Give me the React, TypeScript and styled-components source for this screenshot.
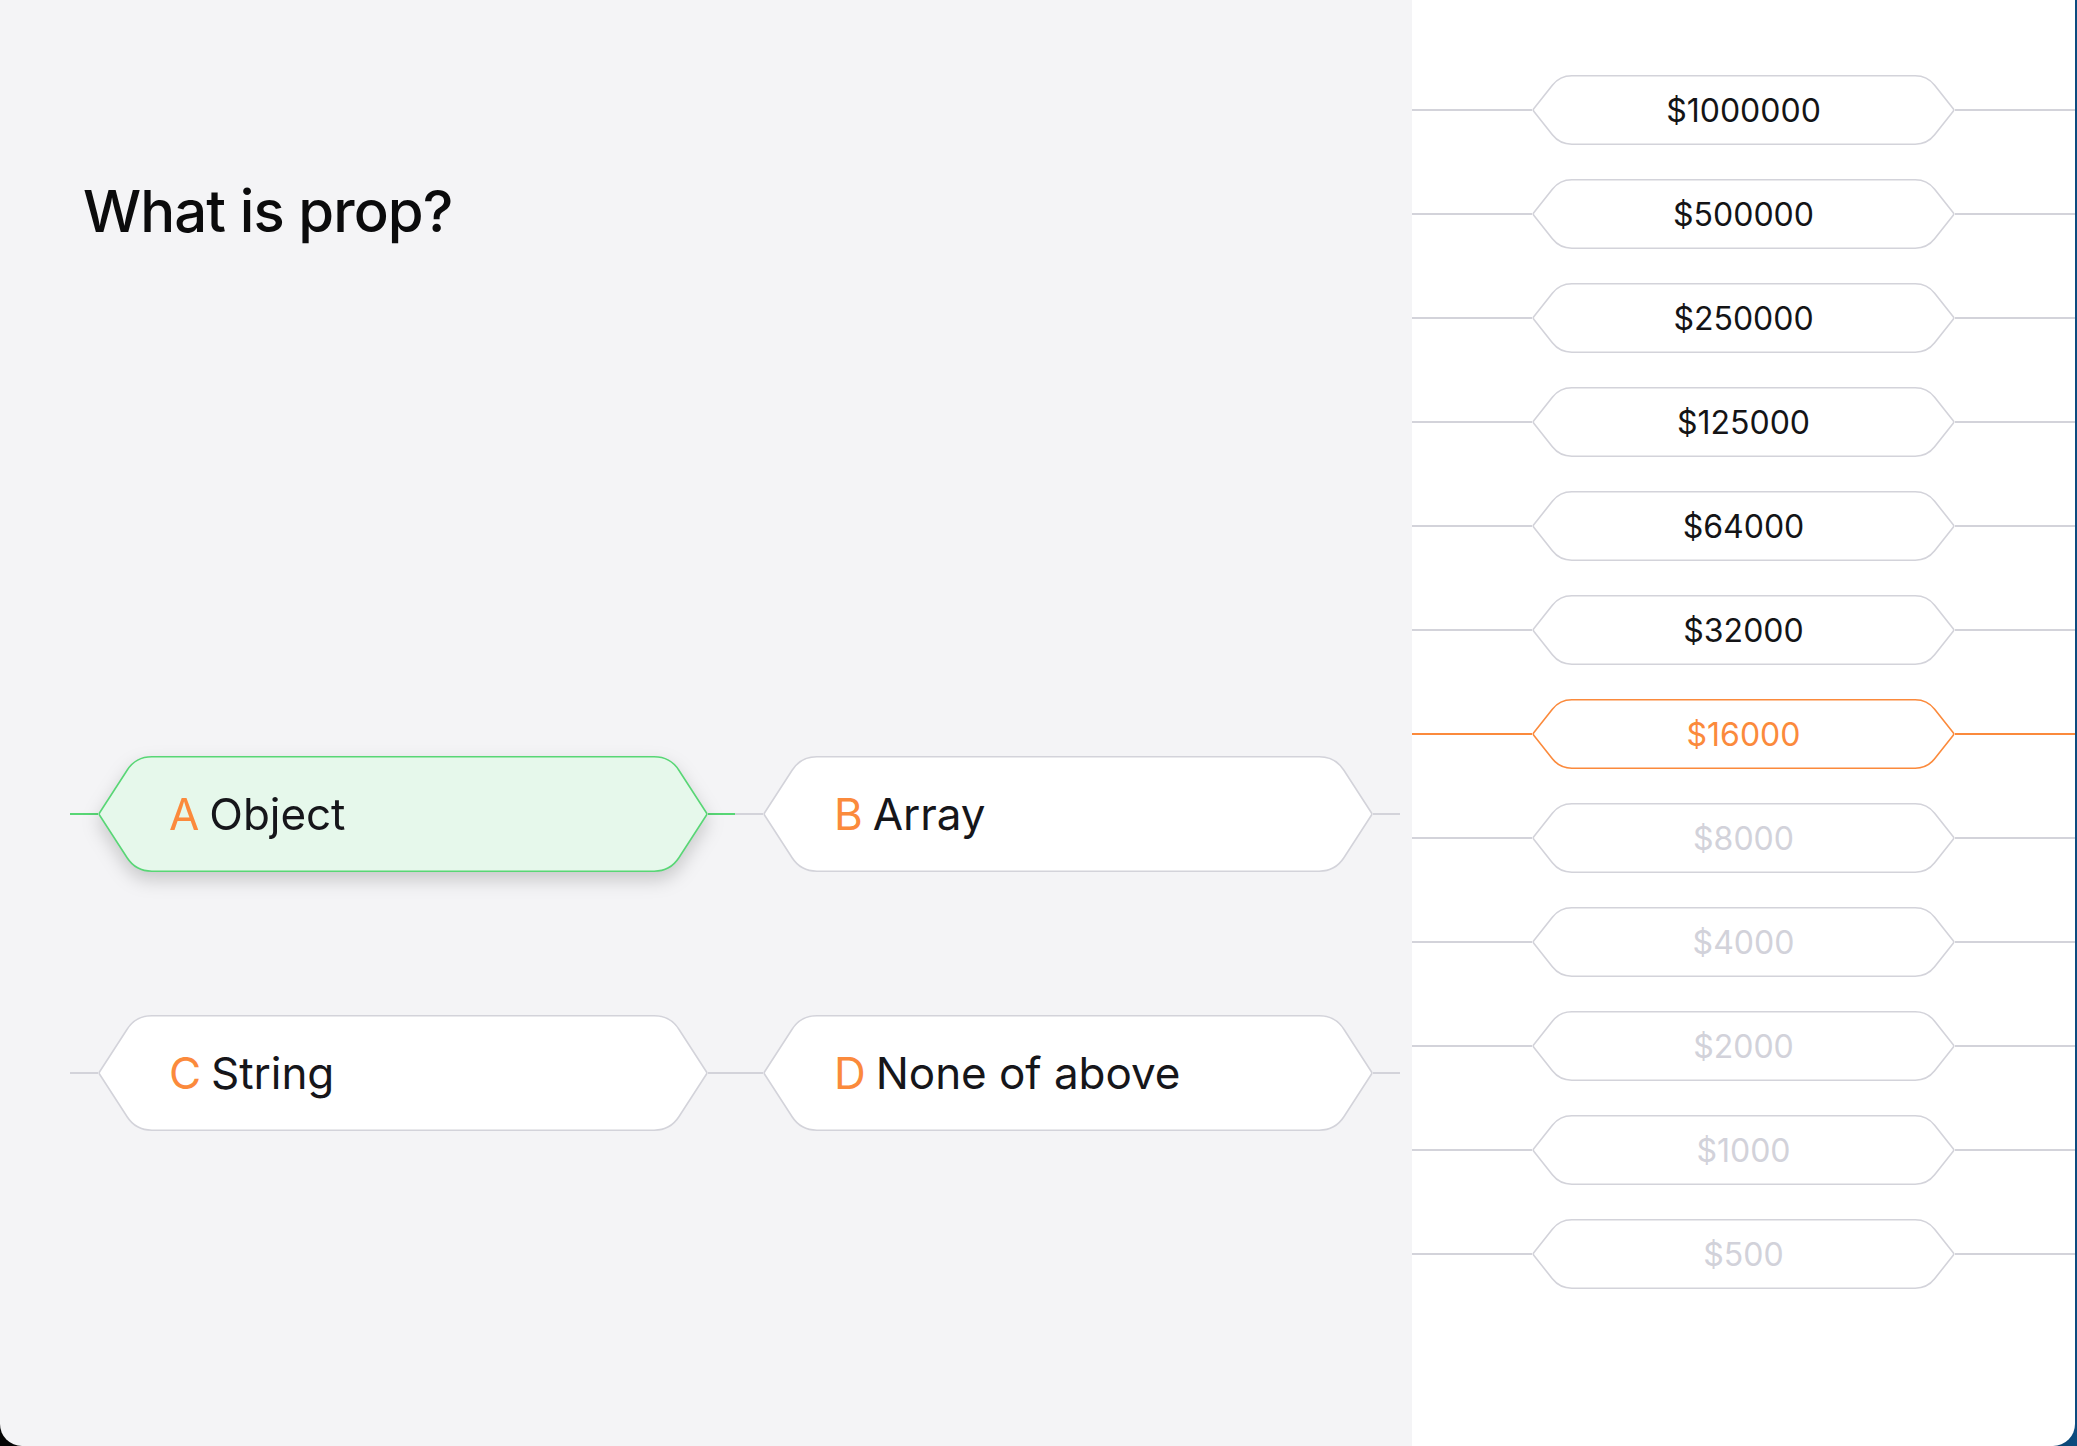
import React from "react";
import styled, { createGlobalStyle, css } from "styled-components";

const GlobalStyle = createGlobalStyle`
  html, body {
    margin: 0;
    padding: 0;
    height: 100%;
  }
  body {
    background: linear-gradient(to right, #050505 0%, #050505 92%, #0c4c80 100%);
    font-family: Inter, "Noto Sans", "Liberation Sans", sans-serif;
    overflow: hidden;
  }
  #root {
    height: 100%;
  }
`;

type Pt = [number, number];

function roundedPath(pts: Pt[], radii: number[]): string {
  const n = pts.length;
  let d = "";
  for (let i = 0; i < n; i++) {
    const P = pts[i];
    const A = pts[(i - 1 + n) % n];
    const B = pts[(i + 1) % n];
    const r = radii[i];
    const la = Math.hypot(A[0] - P[0], A[1] - P[1]);
    const lb = Math.hypot(B[0] - P[0], B[1] - P[1]);
    const s: Pt = [P[0] + ((A[0] - P[0]) / la) * r, P[1] + ((A[1] - P[1]) / la) * r];
    const e: Pt = [P[0] + ((B[0] - P[0]) / lb) * r, P[1] + ((B[1] - P[1]) / lb) * r];
    d += `${i === 0 ? "M" : "L"} ${s[0].toFixed(2)} ${s[1].toFixed(2)} `;
    d += `Q ${P[0]} ${P[1]} ${e[0].toFixed(2)} ${e[1].toFixed(2)} `;
  }
  return d + "Z";
}

function hexPath(w: number, h: number, slant: number, r: number, sw: number) {
  const i = sw / 2;
  const pts: Pt[] = [
    [i + slant, i],
    [w - i - slant, i],
    [w - i, h / 2],
    [w - i - slant, h - i],
    [i + slant, h - i],
    [i, h / 2],
  ];
  return roundedPath(pts, [r, r, 1.5, r, r, 1.5]);
}

const Frame = styled.div`
  display: flex;
  width: 2075px;
  height: 1446px;
  border-radius: 0 0 22px 22px;
  overflow: hidden;
`;

const QuizPanel = styled.section`
  width: 1412px;
  flex: none;
  box-sizing: border-box;
  background: #f4f4f6;
  padding: 175px 15px 0 70px;
  display: flex;
  flex-direction: column;
`;

const Question = styled.h1`
  margin: 0 0 0 13px;
  font-family: Inter, "Noto Sans", sans-serif;
  font-size: 58px;
  line-height: 72px;
  font-weight: 500;
  color: #0b0b0c;
  letter-spacing: -0.9px;
`;

const AnswerGrid = styled.div`
  margin-top: 509px;
  display: grid;
  grid-template-columns: repeat(2, 665px);
  row-gap: 143px;
`;

const Cell = styled.div`
  display: flex;
  align-items: center;
`;

const Connector = styled.div<{ $color: string; $w?: number }>`
  height: 1.5px;
  background: ${(p) => p.$color};
  ${(p) =>
    p.$w
      ? css`
          width: ${p.$w}px;
          flex: none;
        `
      : css`
          flex: 1;
        `}
`;

const HexBox = styled.div<{ $w: number; $h: number; $shadow?: boolean }>`
  position: relative;
  flex: none;
  width: ${(p) => p.$w}px;
  height: ${(p) => p.$h}px;
  display: flex;
  align-items: center;
  ${(p) =>
    p.$shadow &&
    css`
      filter: drop-shadow(0 8px 9px rgba(0, 0, 0, 0.18));
    `}
`;

const HexShape = styled.svg`
  position: absolute;
  inset: 0;
  overflow: visible;
`;

const AnswerText = styled.span`
  position: relative;
  padding-left: 71px;
  font-size: 44px;
  font-weight: 400;
  letter-spacing: -0.05px;
  color: #16161a;
  white-space: nowrap;
`;

const Letter = styled.span`
  color: #fb8a3c;
  margin-right: 10px;
`;

const LadderPanel = styled.aside`
  flex: 1;
  background: #ffffff;
  display: flex;
  flex-direction: column;
  padding-top: 75px;
  gap: 34px;
`;

const Rung = styled.div`
  display: flex;
  align-items: center;
`;

type RungState = "reached" | "current" | "locked";

const Amount = styled.span<{ $state: RungState }>`
  position: relative;
  width: 100%;
  text-align: center;
  font-size: 32px;
  font-weight: 400;
  color: ${(p) =>
    p.$state === "current" ? "#fb8a3c" : p.$state === "locked" ? "#d2d2da" : "#141416"};
`;

interface HexProps {
  w: number;
  h: number;
  slant: number;
  radius: number;
  stroke: string;
  fill: string;
  shadow?: boolean;
  children: React.ReactNode;
}

const Hex: React.FC<HexProps> = ({ w, h, slant, radius, stroke, fill, shadow, children }) => (
  <HexBox $w={w} $h={h} $shadow={shadow}>
    <HexShape width={w} height={h} viewBox={`0 0 ${w} ${h}`}>
      <path d={hexPath(w, h, slant, radius, 1.6)} fill={fill} stroke={stroke} strokeWidth={1.6} />
    </HexShape>
    {children}
  </HexBox>
);

const answers = [
  { letter: "A", text: "Object", selected: true },
  { letter: "B", text: "Array", selected: false },
  { letter: "C", text: "String", selected: false },
  { letter: "D", text: "None of above", selected: false },
];

const prizes = [
  1000000, 500000, 250000, 125000, 64000, 32000, 16000, 8000, 4000, 2000, 1000, 500,
];
const currentIndex = 6;

const GRAY = "#d3d3da";
const GREEN = "#58d675";
const ORANGE = "#fb8a3c";

export default function App() {
  return (
    <>
      <GlobalStyle />
      <Frame>
        <QuizPanel>
          <Question>What is prop?</Question>
          <AnswerGrid>
            {answers.map((a) => {
              const line = a.selected ? GREEN : GRAY;
              return (
                <Cell key={a.letter}>
                  <Connector $color={line} $w={28} />
                  <Hex
                    w={610}
                    h={116}
                    slant={37}
                    radius={16}
                    stroke={a.selected ? GREEN : GRAY}
                    fill={a.selected ? "#e6f8eb" : "#ffffff"}
                    shadow={a.selected}
                  >
                    <AnswerText>
                      <Letter>{a.letter}</Letter>
                      {a.text}
                    </AnswerText>
                  </Hex>
                  <Connector $color={line} $w={27} />
                </Cell>
              );
            })}
          </AnswerGrid>
        </QuizPanel>
        <LadderPanel>
          {prizes.map((p, i) => {
            const state: RungState =
              i === currentIndex ? "current" : i > currentIndex ? "locked" : "reached";
            const color = state === "current" ? ORANGE : GRAY;
            return (
              <Rung key={p}>
                <Connector $color={color} />
                <Hex w={423} h={70} slant={27} radius={12} stroke={color} fill="#ffffff">
                  <Amount $state={state}>${p}</Amount>
                </Hex>
                <Connector $color={color} />
              </Rung>
            );
          })}
        </LadderPanel>
      </Frame>
    </>
  );
}
